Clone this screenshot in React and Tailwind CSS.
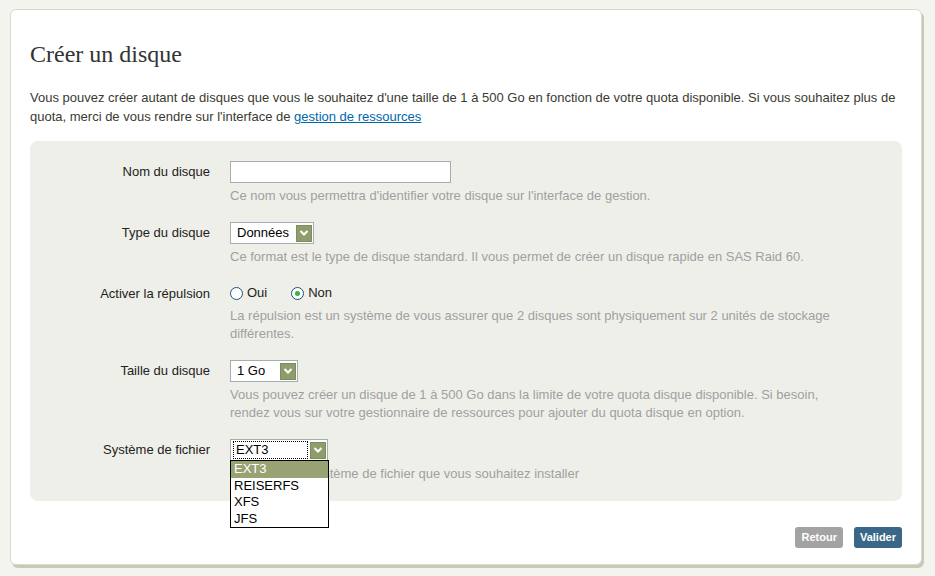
import { useState } from 'react';

const Arrow = () => (
  <span className="flex h-[17px] w-[16px] items-center justify-center border border-[#7d8c5e] bg-[#8f9d6c]">
    <svg width="10" height="8" viewBox="0 0 10 8">
      <path d="M1.5 2 L5 5.5 L8.5 2" stroke="#fff" strokeWidth="2" fill="none" />
    </svg>
  </span>
);

const Select = ({ value, width, focused }) => (
  <div className={`flex h-[22px] items-center justify-between border border-[#a5acb2] bg-white pl-[6px] pr-[1px] ${width}`}>
    <span className={focused ? 'flex-1 -ml-[4px] mr-[2px] border border-dotted border-black px-[2px] leading-[16px]' : ''}>{value}</span>
    <Arrow />
  </div>
);

const Radio = ({ checked, label }) => (
  <label className="flex items-center gap-[4px]">
    <span className="flex h-[13px] w-[13px] items-center justify-center rounded-full border border-[#1c5180] bg-white">
      {checked && <span className="h-[5px] w-[5px] rounded-full bg-[#3cb043]" />}
    </span>
    {label}
  </label>
);

const Row = ({ label, children, help }) => (
  <div className="flex">
    <div className="w-[200px] pr-[20px] pt-[1px] text-right text-[#222]">{label}</div>
    <div className="flex-1">
      {children}
      <p className="mt-[4px] max-w-[600px] leading-[18px] text-[#a0a0a0]">{help}</p>
    </div>
  </div>
);

export default function App() {
  const [name, setName] = useState('');

  return (
    <div className="min-h-screen bg-[#f4f4ee] px-[10px] pt-[9px] font-['Liberation_Sans',Arial,sans-serif] text-[13px]">
      <div className="h-[556px] w-[912px] rounded-[6px] border border-[#d8d8cc] bg-white px-[19px] pt-[30px] shadow-[2px_3px_0_#c9c9b8]">
        <h1 className="font-['Liberation_Serif','Times_New_Roman',serif] text-[24px] leading-[28px] text-[#333]">Créer un disque</h1>
        <p className="mt-[20px] leading-[19px] text-[#3a3a30]">
          Vous pouvez créer autant de disques que vous le souhaitez d'une taille de 1 à 500 Go en fonction de votre quota disponible. Si vous souhaitez plus de quota, merci de vous rendre sur l'interface de{' '}
          <a href="#" className="text-[#0066aa] underline">gestion de ressources</a>
        </p>

        <div className="mt-[15px] flex flex-col gap-[17px] rounded-[8px] bg-[#efefe9] pb-[18px] pt-[20px]">
          <Row label="Nom du disque" help="Ce nom vous permettra d'identifier votre disque sur l'interface de gestion.">
            <input
              value={name}
              onChange={(e) => setName(e.target.value)}
              className="block h-[22px] w-[221px] border border-[#a5acb2] bg-white px-1 outline-none"
            />
          </Row>
          <Row label="Type du disque" help="Ce format est le type de disque standard. Il vous permet de créer un disque rapide en SAS Raid 60.">
            <Select value="Données" width="w-[84px]" />
          </Row>
          <Row label="Activer la répulsion" help="La répulsion est un système de vous assurer que 2 disques sont physiquement sur 2 unités de stockage différentes.">
            <div className="flex h-[20px] items-center gap-[24px] text-[#222]">
              <Radio label="Oui" />
              <Radio label="Non" checked />
            </div>
          </Row>
          <Row label="Taille du disque" help="Vous pouvez créer un disque de 1 à 500 Go dans la limite de votre quota disque disponible. Si besoin, rendez vous sur votre gestionnaire de ressources pour ajouter du quota disque en option.">
            <Select value="1 Go" width="w-[68px]" />
          </Row>
          <Row label="Système de fichier" help="Choisissez le système de fichier que vous souhaitez installer">
            <div className="relative">
              <Select value="EXT3" width="w-[98px]" focused />
              <ul className="absolute left-0 top-[21px] z-10 w-[99px] border border-black bg-white leading-[16.5px] text-black">
                <li className="bg-[#97a373] px-[3px] text-white">EXT3</li>
                <li className="px-[3px]">REISERFS</li>
                <li className="px-[3px]">XFS</li>
                <li className="px-[3px]">JFS</li>
              </ul>
            </div>
          </Row>
        </div>

        <div className="mt-[26px] flex justify-end gap-[11px] text-[11px] font-bold">
          <button className="h-[21px] rounded-[3px] bg-[#a3a3a3] px-[6px] text-white">Retour</button>
          <button className="h-[21px] rounded-[3px] bg-[#3a6787] px-[6px] text-white">Valider</button>
        </div>
      </div>
    </div>
  );
}
